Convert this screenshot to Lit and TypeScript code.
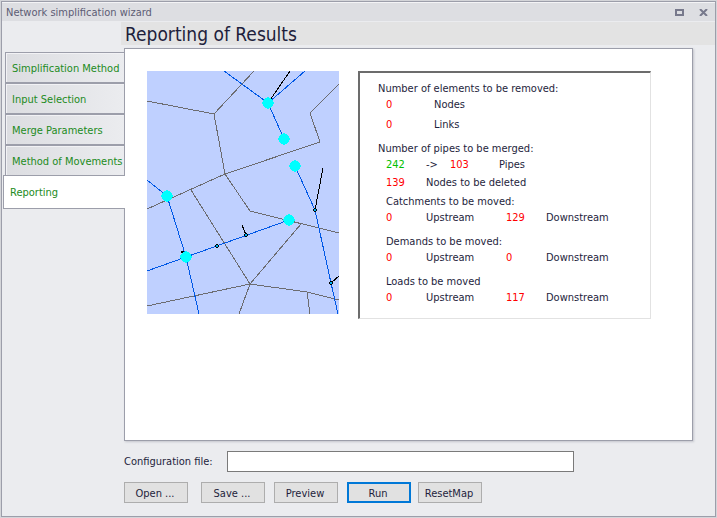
import { LitElement, html, css, svg } from "lit";
import { customElement, state } from "lit/decorators.js";

@customElement("network-map")
class NetworkMap extends LitElement {
  static styles = css`
    :host { display: block; flex: none; }
    svg { display: block; background: #bfd0ff; shape-rendering: crispEdges; }
    .line { fill: none; stroke-width: 1; }
    .catchment { stroke: #6c6c70; }
    .pipe { stroke: #0058e6; }
    .removed { stroke: #000; }
    .node { fill: #00ffff; }
    .small { fill: #000; }
    .core { fill: #00b0f0; }
  `;

  private catchments = [
    "0,30 67,43 78,103", "67,43 107,0", "0,138 78,103 173,71 163,42 192,13",
    "44,119 103,213", "78,103 103,140 192,162", "154,153 103,213 0,235",
    "92,243 103,213 160,221 192,229", "160,221 163,243",
  ];
  private pipes = [
    "77,0 121,32 137,68", "121,32 158,0", "0,109 20,125 39,186 52,243",
    "0,200 39,186 142,149", "148,95 168,139 184,212 191,243",
  ];
  private removed = ["121,32 143,0", "176,97 168,139", "184,212 192,205", "95,154 99,164"];
  private nodes = [[121, 32], [137, 68], [148, 95], [20, 125], [39, 186], [142, 149]];
  private smallNodes = [[70, 175], [99, 164], [168, 139], [184, 212]];

  render() {
    return html`<svg width="192" height="243" viewBox="0 0 192 243" role="img" aria-label="Network map">
      ${this.catchments.map((p) => svg`<polyline class="line catchment" points=${p} />`)}
      ${this.pipes.map((p) => svg`<polyline class="line pipe" points=${p} />`)}
      ${this.removed.map((p) => svg`<polyline class="line removed" points=${p} />`)}
      <rect x="34" y="180" width="3" height="2" />
      ${this.smallNodes.map(([x, y]) => svg`
        <path class="small" d="M${x - 1} ${y - 2}h2v1h1v2h-1v1h-2v-1h-1v-2h1z" />
        <rect class="core" x=${x - 1} y=${y - 1} width="2" height="2" />`)}
      ${this.nodes.map(([x, y]) => svg`<circle class="node" cx=${x} cy=${y} r="5.7" />`)}
    </svg>`;
  }
}

@customElement("result-summary")
class ResultSummary extends LitElement {
  static styles = css`
    :host {
      display: block; box-sizing: border-box; flex: 0 1 293px; min-height: 248px;
      border: 1px solid #e2e2e2; border-top: 2px solid #6c6c6c; border-left: 2px solid #6c6c6c;
      padding: 8px 0 0 18px; line-height: 16px; white-space: nowrap;
    }
    h2 { margin: 0; font: inherit; }
    section { margin-bottom: 8px; }
    section:last-of-type { margin-bottom: 0; }
    .moves { margin-left: 8px; }
    .tight { margin-bottom: 3px; }
    .row { display: grid; grid-template-columns: 40px 80px 40px auto; padding-left: 8px; }
    .moves .row { padding-left: 0; }
    .removed { grid-template-columns: 48px auto; }
    .removed + .removed { margin-top: 4px; }
    .merged { grid-template-columns: 40px 24px 49px auto; }
    .deleted { grid-template-columns: 40px auto; margin-top: 2px; }
    .red { color: #ff0000; }
    .green { color: #00c000; }
  `;

  private moves = [
    { title: "Catchments to be moved:", up: 0, down: 129 },
    { title: "Demands to be moved:", up: 0, down: 0 },
    { title: "Loads to be moved", up: 0, down: 117 },
  ];

  render() {
    return html`
      <section>
        <h2>Number of elements to be removed:</h2>
        <div class="row removed"><span class="red">0</span><span>Nodes</span></div>
        <div class="row removed"><span class="red">0</span><span>Links</span></div>
      </section>
      <section class="tight">
        <h2>Number of pipes to be merged:</h2>
        <div class="row merged">
          <span class="green">242</span><span>-&gt;</span><span class="red">103</span><span>Pipes</span>
        </div>
        <div class="row deleted"><span class="red">139</span><span>Nodes to be deleted</span></div>
      </section>
      ${this.moves.map((m) => html`
        <section class="moves">
          <h2>${m.title}</h2>
          <div class="row">
            <span class="red">${m.up}</span><span>Upstream</span>
            <span class="red">${m.down}</span><span>Downstream</span>
          </div>
        </section>`)}
    `;
  }
}

@customElement("app-root")
class AppRoot extends LitElement {
  static styles = css`
    :host {
      display: flex; flex-direction: column; box-sizing: border-box; min-height: 100vh;
      border: 1px solid #d4d5d9; background: #ebecef; color: #1e1e3c;
      font: 11px/16px "DejaVu Sans Condensed", "DejaVu Sans", sans-serif;
    }
    * { box-sizing: border-box; }
    .window { flex: 1; display: flex; flex-direction: column; border: 1px solid #9c9eaa; }
    .titlebar {
      display: flex; align-items: center; height: 20px; padding: 1px 2px 0 4px;
      background: #dddee2; border-top: 1px solid #f4f4f6; border-bottom: 1px solid #ebecef; color: #5c5c74;
    }
    .titlebar span { flex: 1; }
    .tool { width: 20px; height: 16px; padding: 0; border: 0; background: none; display: grid; place-items: center; }
    .tool + .tool { margin-left: 4px; }
    .body { flex: 1; display: grid; grid-template-columns: 122px 1fr; grid-template-rows: 26px 1fr; }
    h1 {
      grid-column: 2; margin: 0 0 3px -3px; padding-left: 4px; background: #e3e3e3;
      font: 19px/25px "DejaVu Sans Condensed", "DejaVu Sans", sans-serif;
    }
    nav { grid-column: 1; display: flex; flex-direction: column; padding: 4px 0 0 3px; z-index: 1; }
    .tab {
      height: 31px; padding: 2px 0 0 6px; border: 1px solid #9c9eaa; border-right: 0;
      background: linear-gradient(to right, #dcdde1, #ebecef); box-shadow: inset 1px 1px #f2f2f5;
      color: #228b22; font: inherit; text-align: left; white-space: nowrap;
    }
    .tab.active {
      height: 34px; margin: -1px -1px 0 -2px; background: #fff; box-shadow: none;
    }
    .main { grid-column: 2; display: flex; flex-direction: column; padding: 0 22px 13px 0; }
    .panel {
      flex: 1; display: flex; align-items: flex-start; gap: 19px; padding: 22px;
      background: #fff; border: 1px solid #9c9eaa; box-shadow: 1px 1px 2px #c4c5cc;
    }
    .file { display: flex; align-items: center; margin-top: 10px; }
    .file label { width: 103px; }
    .file input { flex: 0 1 347px; min-width: 0; height: 21px; border: 1px solid #7a7a7a; background: #fff; font: inherit; }
    .actions { display: flex; gap: 9px; margin-top: 10px; }
    .action { width: 64px; height: 21px; padding: 2px 2px 0 0; border: 1px solid #adadad; background: #e1e1e1; color: inherit; font: inherit; white-space: nowrap; }
    .action:first-child { margin-right: 4px; }
    .action.primary { border: 2px solid #0078d7; }
    .action.primary + .action { margin-left: -2px; }
  `;

  @state() private active = "Reporting";
  private tabs = ["Simplification Method", "Input Selection", "Merge Parameters", "Method of Movements", "Reporting"];

  render() {
    return html`
      <div class="window">
        <header class="titlebar">
          <span>Network simplification wizard</span>
          <button class="tool" aria-label="Maximize">
            <svg width="9" height="7" shape-rendering="crispEdges"><path d="M0 0h9v7H0zM2 2v3h5V2z" fill="#77798c" fill-rule="evenodd" /></svg>
          </button>
          <button class="tool" aria-label="Close">
            <svg width="9" height="7"><path d="M1 0L8 7M8 0L1 7" stroke="#77798c" stroke-width="2" /></svg>
          </button>
        </header>
        <div class="body">
          <h1>Reporting of Results</h1>
          <nav>
            ${this.tabs.map((t) => html`
              <button class="tab ${t === this.active ? "active" : ""}" @click=${() => (this.active = t)}>${t}</button>`)}
          </nav>
          <div class="main">
            <div class="panel">
              <network-map></network-map>
              <result-summary></result-summary>
            </div>
            <div class="file">
              <label for="config">Configuration file:</label>
              <input id="config" type="text" />
            </div>
            <div class="actions">
              <button class="action">Open ...</button>
              <button class="action">Save ...</button>
              <button class="action">Preview</button>
              <button class="action primary">Run</button>
              <button class="action">ResetMap</button>
            </div>
          </div>
        </div>
      </div>
    `;
  }
}
